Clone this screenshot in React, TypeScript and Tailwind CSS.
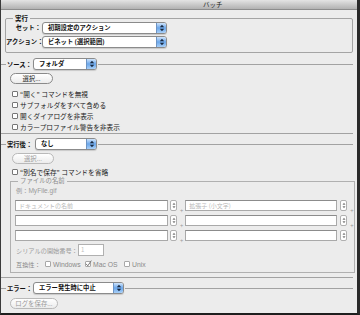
import React from "react";

const JP = "font-['Noto_Sans_CJK_JP','Noto_Sans',sans-serif]";

function Arrows({ color = "#1a2a40" }: { color?: string }) {
  return (
    <svg width="6" height="8" viewBox="0 0 6 8">
      <path d="M3 0.8 L5.2 3.2 L0.8 3.2 Z" fill={color} />
      <path d="M3 7.2 L5.2 4.8 L0.8 4.8 Z" fill={color} />
    </svg>
  );
}

function Select({ w, text }: { w: string; text: string }) {
  return (
    <div
      className={`${w} flex h-[12px] items-center overflow-hidden rounded-[3px] border border-[#8b8b8b] bg-white shadow-[0_1px_1px_rgba(0,0,0,0.15)]`}
    >
      <span className="flex-1 truncate pl-[5px] text-[6.3px] font-bold leading-[10px] text-[#111]">{text}</span>
      <div className="flex h-full w-[10px] items-center justify-center border-l border-[#6d94c4] bg-linear-to-b from-[#cfe4fb] via-[#6aa6ea] to-[#a9d0f8]">
        <Arrows />
      </div>
    </div>
  );
}

function Check({ checked = false, dim = false }: { checked?: boolean; dim?: boolean }) {
  return (
    <span
      className={`relative inline-flex h-[6px] w-[6px] shrink-0 items-center justify-center rounded-[1px] border bg-white ${
        dim ? "border-[#a8a8a8]" : "border-[#777]"
      }`}
    >
      {checked && (
        <svg width="7" height="7" viewBox="0 0 7 7" className="absolute left-[-1px] top-[-2px]">
          <path d="M1 3.8 L2.8 5.8 L6.3 0.6" stroke="#777" strokeWidth="1" fill="none" />
        </svg>
      )}
    </span>
  );
}

function CheckRow({ label, dim = false }: { label: string; dim?: boolean }) {
  return (
    <div className="flex h-[11px] items-center gap-[2px] pl-[11px]">
      <Check dim={dim} />
      <span className={`text-[6.7px] leading-[10px] ${dim ? "text-[#888]" : "text-[#1a1a1a]"}`}>{label}</span>
    </div>
  );
}

function Button({ w, label, dim = false }: { w: string; label: string; dim?: boolean }) {
  return (
    <div
      className={`${w} flex h-[11px] items-center justify-center rounded-full border ${
        dim ? "border-[#b9b9b9] text-[#9a9a9a]" : "border-[#8a8a8a] text-[#1a1a1a]"
      } bg-linear-to-b from-white to-[#ececec] text-[6.4px] leading-[9px]`}
    >
      {label}
    </div>
  );
}

function Line({ cls = "flex-1" }: { cls?: string }) {
  return <div className={`${cls} h-px bg-[#a2a2a2]`} />;
}

function Stepper() {
  return (
    <div className="flex h-[11px] w-[7px] items-center justify-center rounded-[2px] border border-[#b0b0b0] bg-white">
      <svg width="4" height="7" viewBox="0 0 4 7">
        <path d="M2 0.8 L3.5 2.8 L0.5 2.8 Z" fill="#777" />
        <path d="M2 6.2 L3.5 4.2 L0.5 4.2 Z" fill="#777" />
      </svg>
    </div>
  );
}

function Field({ w, ph }: { w: string; ph?: string }) {
  return (
    <div
      className={`${w} flex h-[11px] items-center border border-[#a9a9a9] border-t-[#8c8c8c] bg-white pl-[3px] text-[6px] leading-[9px] text-[#b8b8b8]`}
    >
      {ph}
    </div>
  );
}

function Plus() {
  return <span className="w-[4px] text-center text-[6px] leading-[9px] text-[#999]">+</span>;
}

function ComboRow({ left, right, last = false }: { left?: string; right?: string; last?: boolean }) {
  return (
    <div className="flex h-[11px] items-center pl-[4px]">
      <Field w="w-[153px]" ph={left} />
      <div className="ml-[2px]">
        <Stepper />
      </div>
      <div className="ml-[3px]">
        <Plus />
      </div>
      <div className="ml-[2px]">
        <Field w="w-[152px]" ph={right} />
      </div>
      <div className="ml-[3px]">
        <Stepper />
      </div>
      {!last && (
        <div className="ml-[3px]">
          <Plus />
        </div>
      )}
    </div>
  );
}

export default function App() {
  return (
    <div
      className={`${JP} flex h-[315px] w-[360px] flex-col overflow-hidden border-b-2 border-l border-r-[3px] border-b-[#1e1e1e] border-l-[#3a3a3a] border-r-[#2a2a2a] bg-[#ececec] text-black`}
    >
      {/* title bar */}
      <div className="flex h-[10px] shrink-0 items-center border-b border-[#8d8d8d] bg-linear-to-b from-[#e4e4e4] to-[#b2b2b2] pl-[202px]">
        <span className="text-[6.5px] leading-[9px] text-[#222]">バッチ</span>
      </div>

      {/* 実行 group */}
      <fieldset className="ml-[4px] mt-[4px] w-[348px] shrink-0 rounded-[2px] border border-[#a4a4a4] pb-[5px]">
        <legend className="ml-[7px] px-[2px] text-[6.5px] font-bold leading-[8px] text-[#111]">実行</legend>
        <div className="flex flex-col gap-[3px]">
          <div className="flex h-[11px] items-center">
            <span className="w-[35px] text-right text-[6.3px] font-bold leading-[9px] text-[#111]">セット：</span>
            <div className="ml-[1px]">
              <Select w="w-[125px]" text="初期設定のアクション" />
            </div>
          </div>
          <div className="flex h-[11px] items-center">
            <span className="w-[35px] whitespace-nowrap text-right text-[6.3px] font-bold leading-[9px] text-[#111]">アクション：</span>
            <div className="ml-[1px]">
              <Select w="w-[125px]" text="ビネット (選択範囲)" />
            </div>
          </div>
        </div>
      </fieldset>

      {/* ソース */}
      <div className="mt-[5px] flex h-[12px] shrink-0 items-center pr-[4px]">
        <Line cls="w-[5px]" />
        <span className="ml-[1px] w-[26px] text-[6.3px] font-bold leading-[9px] text-[#111]">ソース：</span>
        <Select w="w-[64px]" text="フォルダ" />
        <div className="ml-[1px] flex-1">
          <Line cls="w-full" />
        </div>
      </div>
      <div className="ml-[9px] mt-[3px] shrink-0">
        <Button w="w-[43px]" label="選択..." />
      </div>
      <div className="mt-[4px] flex shrink-0 flex-col">
        <CheckRow label="“開く” コマンドを無視" />
        <CheckRow label="サブフォルダをすべて含める" />
        <CheckRow label="開くダイアログを非表示" />
        <CheckRow label="カラープロファイル警告を非表示" />
      </div>
      <div className="mt-[1px] flex shrink-0 pr-[4px]">
        <Line />
      </div>

      {/* 実行後 */}
      <div className="mt-[4px] flex h-[12px] shrink-0 items-center pr-[4px]">
        <Line cls="w-[5px]" />
        <span className="ml-[1px] w-[28px] text-[6.3px] font-bold leading-[9px] text-[#111]">実行後：</span>
        <Select w="w-[62px]" text="なし" />
        <div className="ml-[1px] flex-1">
          <Line cls="w-full" />
        </div>
      </div>
      <div className="ml-[11px] mt-[3px] shrink-0">
        <Button w="w-[42px]" label="選択..." dim />
      </div>
      <div className="mt-[2px] shrink-0">
        <CheckRow label="“別名で保存” コマンドを省略" />
      </div>

      <fieldset className="ml-[9px] w-[345px] shrink-0 border border-[#b0b0b0] pb-[3px]">
        <legend className="ml-[7px] px-[2px] text-[6.4px] leading-[8px] text-[#8a8a8a]">ファイルの名前</legend>
        <div className="flex h-[10px] items-center pl-[5px] text-[6.2px] leading-[9px] text-[#9a9a9a]">
          例：<span className="font-['Liberation_Sans',sans-serif] text-[6.6px]">MyFile.gif</span>
        </div>
        <div className="mt-[5px] flex flex-col gap-[4px]">
          <ComboRow left="ドキュメントの名前" right="拡張子 (小文字)" />
          <ComboRow />
          <ComboRow last />
        </div>
        <div className="mt-[3px] flex h-[12px] items-center pl-[5px]">
          <span className="w-[62px] text-[6.2px] leading-[9px] text-[#9a9a9a]">シリアルの開始番号：</span>
          <div className="h-[12px] w-[26px] border border-[#b0b0b0] bg-white pl-[2px] text-[6px] leading-[10px] text-[#c0c0c0]">
            1
          </div>
        </div>
        <div className="mt-[3px] flex h-[10px] items-center pl-[5px] text-[#8a8a8a]">
          <span className="w-[29px] text-[6.2px] leading-[9px]">互換性：</span>
          <Check dim />
          <span className="ml-[2px] w-[32px] font-['Liberation_Sans',sans-serif] text-[6.8px] leading-[9px]">Windows</span>
          <Check checked dim />
          <span className="ml-[2px] w-[31px] font-['Liberation_Sans',sans-serif] text-[6.8px] leading-[9px]">Mac OS</span>
          <Check dim />
          <span className="ml-[2px] font-['Liberation_Sans',sans-serif] text-[6.8px] leading-[9px]">Unix</span>
        </div>
      </fieldset>

      <div className="mt-[4px] flex shrink-0 pr-[4px]">
        <Line />
      </div>

      {/* エラー */}
      <div className="mt-[4px] flex h-[12px] shrink-0 items-center pr-[4px]">
        <Line cls="w-[5px]" />
        <span className="ml-[1px] w-[26px] text-[6.3px] font-bold leading-[9px] text-[#111]">エラー：</span>
        <Select w="w-[91px]" text="エラー発生時に中止" />
        <div className="ml-[1px] flex-1">
          <Line cls="w-full" />
        </div>
      </div>
      <div className="ml-[9px] mt-[4px] shrink-0">
        <Button w="w-[48px]" label="ログを保存..." dim />
      </div>
    </div>
  );
}
